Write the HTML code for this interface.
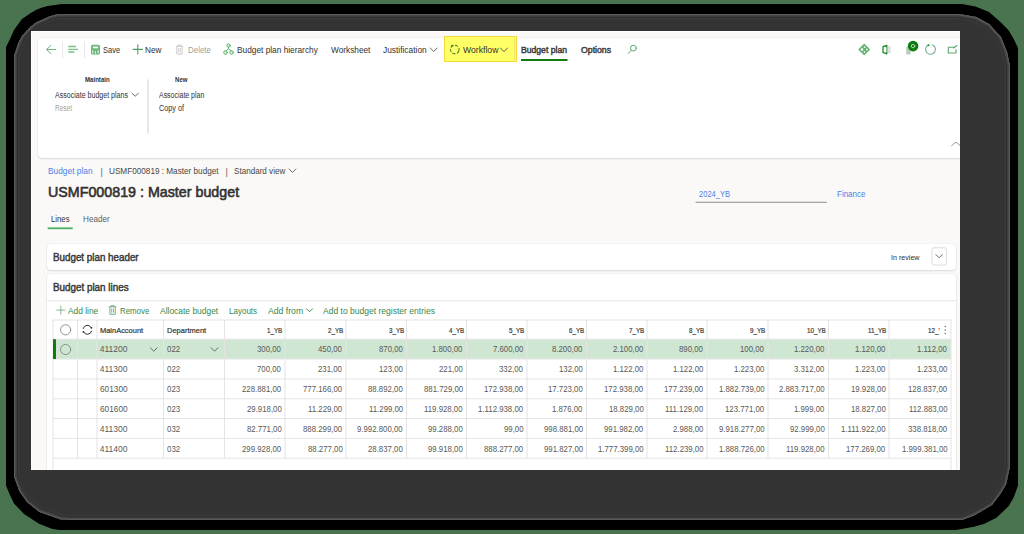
<!DOCTYPE html>
<html><head><meta charset="utf-8">
<style>
*{box-sizing:border-box;margin:0;padding:0}
html,body{width:1024px;height:534px;overflow:hidden;background:#4a7350;font-family:"Liberation Sans",sans-serif;position:relative}
.a{position:absolute}
#blk{left:6px;top:4px;width:1012px;height:526px;background:#000;border-radius:54px 54px 50px 50px}
#gry{left:14px;top:14px;width:996px;height:506px;background:#333;border-radius:46px;box-shadow:inset 0 0 0 1px #5a5a5a, inset 0 0 0 2px #454545, inset 0 0 0 3px #3c3c3c, inset 0 0 0 4px #2c2c2c}
#clip{left:0;top:0;width:1024px;height:534px;clip-path:inset(31px 64px 64px 31px)}
#app{left:31px;top:31px;width:929px;height:439px;background:#faf9f8;border-left:1px solid #fff;border-top:1px solid #fff}
.card{position:absolute;background:#fff;border-radius:4px;box-shadow:0 0 1.5px rgba(0,0,0,.13),0 1px 2px rgba(0,0,0,.11)}
.t{position:absolute;white-space:nowrap;transform-origin:0 0}
svg{position:absolute;left:0;top:0}
</style></head><body>
<svg width="1024" height="534" style="position:absolute;left:0;top:0">
<defs><clipPath id="gc"><path d="M14 55 L15.2 52.8 L18 43.8 L21.9 36 L30.3 27 L36 22.5 L43.2 19.3 L49.3 16.4 L58.1 14 L959 14 L976.2 17 L989 24 L1001 37 L1007 52 L1010 66 L1010 466 L1006.2 484 L1001 493 L992 505 L974 515.4 L962 520 L70 520 L60 519.2 L39 511.7 L27 502 L19.5 491.5 L14 476.5 Z"/></clipPath></defs>
<path d="M6 47 L10 39 L14 30 L22 19 L30 13.5 L35.9 10 L40.8 7.9 L47.6 5.9 L62 4 L962 4 L975.5 6.5 L989 12 L999.4 21 L1008.4 30 L1013.7 39 L1018 48 L1018 485.5 L1013.7 497.4 L1008.4 506.4 L996.4 517.7 L984.4 523.7 L974 526.7 L956 530 L60 530 L52.4 528.9 L39 523.7 L24 514 L14 503.4 L9.7 494.4 L6 485.5 Z" fill="#000"/>
<path d="M14 55 L15.2 52.8 L18 43.8 L21.9 36 L30.3 27 L36 22.5 L43.2 19.3 L49.3 16.4 L58.1 14 L959 14 L976.2 17 L989 24 L1001 37 L1007 52 L1010 66 L1010 466 L1006.2 484 L1001 493 L992 505 L974 515.4 L962 520 L70 520 L60 519.2 L39 511.7 L27 502 L19.5 491.5 L14 476.5 Z" fill="#333"/>
<g clip-path="url(#gc)" fill="none">
<path d="M14 55 L15.2 52.8 L18 43.8 L21.9 36 L30.3 27 L36 22.5 L43.2 19.3 L49.3 16.4 L58.1 14 L959 14 L976.2 17 L989 24 L1001 37 L1007 52 L1010 66 L1010 466 L1006.2 484 L1001 493 L992 505 L974 515.4 L962 520 L70 520 L60 519.2 L39 511.7 L27 502 L19.5 491.5 L14 476.5 Z" stroke="#353535" stroke-width="12"/>
<path d="M14 55 L15.2 52.8 L18 43.8 L21.9 36 L30.3 27 L36 22.5 L43.2 19.3 L49.3 16.4 L58.1 14 L959 14 L976.2 17 L989 24 L1001 37 L1007 52 L1010 66 L1010 466 L1006.2 484 L1001 493 L992 505 L974 515.4 L962 520 L70 520 L60 519.2 L39 511.7 L27 502 L19.5 491.5 L14 476.5 Z" stroke="#3a3a3a" stroke-width="10"/>
<path d="M14 55 L15.2 52.8 L18 43.8 L21.9 36 L30.3 27 L36 22.5 L43.2 19.3 L49.3 16.4 L58.1 14 L959 14 L976.2 17 L989 24 L1001 37 L1007 52 L1010 66 L1010 466 L1006.2 484 L1001 493 L992 505 L974 515.4 L962 520 L70 520 L60 519.2 L39 511.7 L27 502 L19.5 491.5 L14 476.5 Z" stroke="#2e2e2e" stroke-width="8"/>
<path d="M14 55 L15.2 52.8 L18 43.8 L21.9 36 L30.3 27 L36 22.5 L43.2 19.3 L49.3 16.4 L58.1 14 L959 14 L976.2 17 L989 24 L1001 37 L1007 52 L1010 66 L1010 466 L1006.2 484 L1001 493 L992 505 L974 515.4 L962 520 L70 520 L60 519.2 L39 511.7 L27 502 L19.5 491.5 L14 476.5 Z" stroke="#3d3d3d" stroke-width="6"/>
<path d="M14 55 L15.2 52.8 L18 43.8 L21.9 36 L30.3 27 L36 22.5 L43.2 19.3 L49.3 16.4 L58.1 14 L959 14 L976.2 17 L989 24 L1001 37 L1007 52 L1010 66 L1010 466 L1006.2 484 L1001 493 L992 505 L974 515.4 L962 520 L70 520 L60 519.2 L39 511.7 L27 502 L19.5 491.5 L14 476.5 Z" stroke="#464646" stroke-width="4"/>
<path d="M14 55 L15.2 52.8 L18 43.8 L21.9 36 L30.3 27 L36 22.5 L43.2 19.3 L49.3 16.4 L58.1 14 L959 14 L976.2 17 L989 24 L1001 37 L1007 52 L1010 66 L1010 466 L1006.2 484 L1001 493 L992 505 L974 515.4 L962 520 L70 520 L60 519.2 L39 511.7 L27 502 L19.5 491.5 L14 476.5 Z" stroke="#5a5a5a" stroke-width="2"/>
</g>
</svg>
<div class="a" id="clip">
<div class="a" id="app"></div>
<div class="card" style="left:38px;top:38px;width:940px;height:119.5px"></div>
<div class="card" style="left:47px;top:243.5px;width:909px;height:26.5px"></div>
<div class="card" style="left:47px;top:274px;width:909px;height:240px"></div>
<!-- yellow workflow -->
<div class="a" style="left:443.5px;top:35.7px;width:73.8px;height:26.4px;background:#ffff66;border:1px solid #f8d838"></div>
<svg width="1024" height="534" viewBox="0 0 1024 534">
 <g fill="none" stroke-linecap="round" stroke-linejoin="round">
 <!-- separators -->
 <line x1="62.5" y1="41.5" x2="62.5" y2="58" stroke="#e8e8e8" stroke-width="1"/>
 <line x1="84.5" y1="41.5" x2="84.5" y2="58" stroke="#e8e8e8" stroke-width="1"/>
 <line x1="148" y1="80" x2="148" y2="133" stroke="#e1dfdd" stroke-width="1.5"/>
 <!-- back arrow -->
 <path d="M51 45.3 L46.6 49.5 L51 53.7 M46.8 49.5 H55.8" stroke="#6cb47c" stroke-width="1"/>
 <!-- lines icon -->
 <path d="M68.3 46.5 H76 M68.3 49.3 H78 M68.3 52 H74.5" stroke="#7cc08b" stroke-width="1.3" stroke-linecap="butt"/>
 <!-- save icon -->
 <rect x="91" y="44.8" width="9" height="9.6" rx="1.5" fill="#6cb87a"/>
 <rect x="92.9" y="46.6" width="5.2" height="1.7" fill="#fff"/>
 <rect x="92.3" y="50.3" width="1" height="3" fill="#f4fbf5"/>
 <rect x="94.9" y="51.2" width="1" height="2.4" fill="#eaf5ec"/>
 <rect x="97.6" y="50.3" width="1" height="3" fill="#f4fbf5"/>
 <!-- plus -->
 <path d="M133.2 49.4 H142.5 M137.8 44.8 V54" stroke="#4f9d63" stroke-width="1.1"/>
 <!-- delete -->
 <path d="M176.3 46.3 H182.7 M178 46.2 V45 H181 V46.2 M176.8 46.5 V54 H182.2 V46.5 M178.6 48.5 V52 M180.4 48.5 V52" stroke="#c8c6c4" stroke-width="0.9"/>
 <!-- hierarchy -->
 <circle cx="228.5" cy="45.5" r="1.7" fill="#dff0e2" stroke="#5cb46c" stroke-width="1"/>
 <circle cx="225.5" cy="52.5" r="1.8" fill="#dff0e2" stroke="#5cb46c" stroke-width="1"/>
 <circle cx="231.6" cy="52.5" r="1.8" fill="#dff0e2" stroke="#5cb46c" stroke-width="1"/>
 <path d="M228.5 47.2 V48.8 L226.2 50.8 M228.5 48.8 L230.9 50.8" stroke="#5cb46c" stroke-width="1"/>
 <!-- chevrons grey -->
 <path d="M430.3 48 L433.7 51.6 L437.1 48" stroke="#605e5c" stroke-width="0.9"/>
 <path d="M500.5 48 L504 51.6 L507.5 48" stroke="#484644" stroke-width="0.9"/>
 <path d="M131.9 93.2 L135.2 96.2 L138.5 93.2" stroke="#605e5c" stroke-width="0.9"/>
 <path d="M289.1 169 L292.4 172.4 L295.8 169" stroke="#605e5c" stroke-width="0.9"/>
 <path d="M951.7 145.6 L955.9 142 L960 145.6" stroke="#8a8886" stroke-width="0.9"/>
 <path d="M306.5 308.8 L309.5 311.8 L312.5 308.8" stroke="#2f7d3a" stroke-width="0.9"/>
 <path d="M935.7 254.3 L939 257.3 L942.3 254.3" stroke="#605e5c" stroke-width="0.9"/>
 <line x1="514.6" y1="38.5" x2="514.6" y2="59.5" stroke="#e2d96a" stroke-width="0.8" stroke-dasharray="1 1"/>
 <!-- workflow icon -->
 <circle cx="454.8" cy="49.5" r="4.3" stroke="#4a7a2a" stroke-width="1" stroke-dasharray="2.6 2.1" transform="rotate(20 454.8 49.5)"/>
 <circle cx="452" cy="45.7" r="0.9" fill="#1a8a2a"/>
 <!-- budget plan underline -->
 <rect x="521" y="59" width="46.5" height="2" fill="#107c10"/>
 <!-- search -->
 <circle cx="633.4" cy="48.1" r="2.9" stroke="#5aa86d" stroke-width="1"/>
 <path d="M631.3 50.3 L628.2 53.4" stroke="#5aa86d" stroke-width="1"/>
 <!-- right icons -->
 <path d="M864.2 44.4 L869.3 49.5 L864.2 54.6 L859.1 49.5 Z" fill="#62b274" stroke="#62b274" stroke-width="1.2" stroke-linejoin="round"/>
 <circle cx="862" cy="49.5" r="1.3" fill="#fff"/>
 <circle cx="864.6" cy="47.2" r="0.9" fill="#f0f8f1"/>
 <circle cx="866.9" cy="49.5" r="0.9" fill="#f0f8f1"/>
 <circle cx="864.5" cy="51.9" r="0.9" fill="#f0f8f1"/>
 <path d="M886.8 45.3 L883 46.7 V52.4 L886.8 53.8 Z" fill="#fff" stroke="#1d8a2b" stroke-width="1.3" stroke-linejoin="round"/>
 <rect x="885.2" y="47.3" width="1.2" height="4.8" fill="#fff"/>
 <rect x="887.8" y="46.3" width="2.6" height="6.8" fill="#d0d0d0"/>
 <rect x="888.5" y="47" width="0.9" height="5.4" fill="#f4f4f4"/>
 <rect x="906.3" y="46.5" width="4.3" height="8" rx="1" fill="#b9c9ba"/>
 <circle cx="913.1" cy="46.1" r="5.3" fill="#107c10"/>
 <circle cx="913" cy="46.1" r="1.7" stroke="#cfe8cf" stroke-width="0.8"/>
 <path d="M928.3 45 A4.9 4.9 0 1 0 932.6 44.9" stroke="#78ab94" stroke-width="1.1"/>
 <circle cx="928.5" cy="45.2" r="1" fill="#1a8a2a"/>
 <path d="M948.5 47.3 H954 M948.3 47.3 V53 H956 V49.5 M953.5 48 L957 45.5" stroke="#5aa86d" stroke-width="1.1"/>
 <!-- tab underline -->
 <rect x="47.7" y="227.4" width="25" height="1.8" fill="#4caf61"/>
 <!-- 2024 underline -->
 <rect x="695.6" y="201.7" width="131.3" height="1.3" fill="#a6a6a6"/>
 <!-- dropdown button -->
 <rect x="931.9" y="247.8" width="14.5" height="17.2" rx="2" stroke="#dcdcdc" stroke-width="1" fill="#fff"/>
 <path d="M935.9 254.6 L939.1 257.8 L942.3 254.6" stroke="#605e5c" stroke-width="0.9"/>
 <!-- lines card separator -->
 <rect x="47" y="300.2" width="909" height="1" fill="#e8e6e4"/>
 <!-- add line plus -->
 <path d="M56.8 310.1 H64.8 M60.8 306.1 V314.2" stroke="#8ab596" stroke-width="1"/>
 <!-- remove trash -->
 <path d="M109.3 306.8 H115.8 M111 306.7 V305.7 H114 V306.7 M109.9 307 V314.3 H115.3 V307 M111.7 309 V312.3 M113.5 309 V312.3" stroke="#6aa87a" stroke-width="0.9"/>
</g>
<rect x="53" y="339.2" width="898" height="19.8" fill="#cfe6d2"/>
<rect x="53" y="319.5" width="898" height="1" fill="#e5e4e3"/>
<rect x="53" y="338.7" width="898" height="1" fill="#e5e4e3"/>
<rect x="53" y="358.5" width="898" height="1" fill="#e5e4e3"/>
<rect x="53" y="378.4" width="898" height="1" fill="#e5e4e3"/>
<rect x="53" y="398.3" width="898" height="1" fill="#e5e4e3"/>
<rect x="53" y="418.1" width="898" height="1" fill="#e5e4e3"/>
<rect x="53" y="437.9" width="898" height="1" fill="#e5e4e3"/>
<rect x="53" y="457.7" width="898" height="1" fill="#e5e4e3"/>
<rect x="52.5" y="320" width="1" height="150" fill="#e5e4e3"/>
<rect x="77.0" y="320" width="1" height="138.7" fill="#e5e4e3"/>
<rect x="96.5" y="320" width="1" height="138.7" fill="#e5e4e3"/>
<rect x="163.0" y="320" width="1" height="138.7" fill="#e5e4e3"/>
<rect x="224.0" y="320" width="1" height="138.7" fill="#e5e4e3"/>
<rect x="284.5" y="320" width="1" height="138.7" fill="#e5e4e3"/>
<rect x="345.5" y="320" width="1" height="138.7" fill="#e5e4e3"/>
<rect x="406.0" y="320" width="1" height="138.7" fill="#e5e4e3"/>
<rect x="466.0" y="320" width="1" height="138.7" fill="#e5e4e3"/>
<rect x="526.5" y="320" width="1" height="138.7" fill="#e5e4e3"/>
<rect x="586.0" y="320" width="1" height="138.7" fill="#e5e4e3"/>
<rect x="646.5" y="320" width="1" height="138.7" fill="#e5e4e3"/>
<rect x="706.5" y="320" width="1" height="138.7" fill="#e5e4e3"/>
<rect x="767.5" y="320" width="1" height="138.7" fill="#e5e4e3"/>
<rect x="828.0" y="320" width="1" height="138.7" fill="#e5e4e3"/>
<rect x="888.5" y="320" width="1" height="138.7" fill="#e5e4e3"/>
<rect x="950.5" y="320" width="1" height="150" fill="#e5e4e3"/>
<rect x="53" y="339.2" width="3" height="19.8" fill="#107c10"/>
<g fill="none" stroke-linecap="round" stroke-linejoin="round">
<circle cx="65.6" cy="329.8" r="5.1" stroke="#8a8886" stroke-width="0.9"/>
<circle cx="65.6" cy="349.5" r="5.1" stroke="#7f8a80" stroke-width="0.9"/>
<path d="M83.2 328.5 A4.4 4.4 0 0 1 91.3 327.6 M91.6 331.1 A4.4 4.4 0 0 1 83.5 332" stroke="#323130" stroke-width="1"/>
<circle cx="91.4" cy="327.8" r="0.9" fill="#323130"/><circle cx="83.4" cy="331.8" r="0.9" fill="#323130"/>
<path d="M150.4 347.8 L153.8 351.2 L157.2 347.8" stroke="#605e5c" stroke-width="0.9"/>
<path d="M211.2 347.8 L214.6 351.2 L218 347.8" stroke="#605e5c" stroke-width="0.9"/>
</g>
<circle cx="945.2" cy="326.5" r="0.7" fill="#605e5c"/><circle cx="945.2" cy="330" r="0.7" fill="#605e5c"/><circle cx="945.2" cy="333.5" r="0.7" fill="#605e5c"/>

</svg>
<div class="t" style="left:103.20px;top:45.31px;font-size:9px;line-height:10.35px;color:#323130;transform:scaleX(0.838)">Save</div>
<div class="t" style="left:145.40px;top:45.31px;font-size:9px;line-height:10.35px;color:#323130;transform:scaleX(0.910)">New</div>
<div class="t" style="left:188.00px;top:45.31px;font-size:9px;line-height:10.35px;color:#a19f9d;transform:scaleX(0.884)">Delete</div>
<div class="t" style="left:236.90px;top:45.31px;font-size:9px;line-height:10.35px;color:#323130;transform:scaleX(0.923)">Budget plan hierarchy</div>
<div class="t" style="left:330.60px;top:45.31px;font-size:9px;line-height:10.35px;color:#323130;transform:scaleX(0.919)">Worksheet</div>
<div class="t" style="left:383.30px;top:45.31px;font-size:9px;line-height:10.35px;color:#323130;transform:scaleX(0.929)">Justification</div>
<div class="t" style="left:462.60px;top:45.31px;font-size:9px;line-height:10.35px;color:#323130;transform:scaleX(0.961)">Workflow</div>
<div class="t" style="left:521.00px;top:45.31px;font-size:9px;line-height:10.35px;color:#3b3a39;-webkit-text-stroke:0.45px #3b3a39;transform:scaleX(0.957)">Budget plan</div>
<div class="t" style="left:580.50px;top:45.31px;font-size:9px;line-height:10.35px;color:#3b3a39;-webkit-text-stroke:0.45px #3b3a39;transform:scaleX(0.970)">Options</div>
<div class="t" style="left:84.70px;top:75.71px;font-size:6.5px;line-height:7.47px;color:#323130;font-weight:700;transform:scaleX(0.936)">Maintain</div>
<div class="t" style="left:175.00px;top:75.71px;font-size:6.5px;line-height:7.47px;color:#323130;font-weight:700;transform:scaleX(0.935)">New</div>
<div class="t" style="left:55.00px;top:91.17px;font-size:8.5px;line-height:9.77px;color:#323130;transform:scaleX(0.830)">Associate budget plans</div>
<div class="t" style="left:55.00px;top:104.47px;font-size:8.5px;line-height:9.77px;color:#a19f9d;transform:scaleX(0.765)">Reset</div>
<div class="t" style="left:158.60px;top:91.17px;font-size:8.5px;line-height:9.77px;color:#323130;transform:scaleX(0.819)">Associate plan</div>
<div class="t" style="left:158.60px;top:104.47px;font-size:8.5px;line-height:9.77px;color:#323130;transform:scaleX(0.853)">Copy of</div>
<div class="t" style="left:48.10px;top:166.01px;font-size:9px;line-height:10.35px;color:#4f7fe3;transform:scaleX(0.928)">Budget plan</div>
<div class="t" style="left:100.50px;top:167.01px;font-size:9px;line-height:10.35px;color:#605e5c">|</div>
<div class="t" style="left:108.50px;top:166.01px;font-size:9px;line-height:10.35px;color:#484644;transform:scaleX(0.909)">USMF000819 : Master budget</div>
<div class="t" style="left:225.50px;top:167.01px;font-size:9px;line-height:10.35px;color:#605e5c">|</div>
<div class="t" style="left:234.20px;top:166.01px;font-size:9px;line-height:10.35px;color:#484644;transform:scaleX(0.899)">Standard view</div>
<div class="t" style="left:48.40px;top:183.38px;font-size:15px;line-height:17.25px;color:#323130;-webkit-text-stroke:0.6px #323130;transform:scaleX(0.951)">USMF000819 : Master budget</div>
<div class="t" style="left:51.00px;top:213.51px;font-size:9px;line-height:10.35px;color:#323130;transform:scaleX(0.860)">Lines</div>
<div class="t" style="left:82.90px;top:213.51px;font-size:9px;line-height:10.35px;color:#605e5c;transform:scaleX(0.904)">Header</div>
<div class="t" style="left:698.90px;top:189.31px;font-size:9px;line-height:10.35px;color:#4f7fe3;transform:scaleX(0.837)">2024_YB</div>
<div class="t" style="left:836.90px;top:189.31px;font-size:9px;line-height:10.35px;color:#4f7fe3;transform:scaleX(0.887)">Finance</div>
<div class="t" style="left:53.40px;top:252.09px;font-size:10px;line-height:11.50px;color:#3b3a39;-webkit-text-stroke:0.45px #3b3a39;transform:scaleX(0.981)">Budget plan header</div>
<div class="t" style="left:891.20px;top:252.73px;font-size:8px;line-height:9.20px;color:#323130;transform:scaleX(0.890)">In review</div>
<div class="t" style="left:53.40px;top:281.79px;font-size:10px;line-height:11.50px;color:#3b3a39;-webkit-text-stroke:0.45px #3b3a39;transform:scaleX(0.985)">Budget plan lines</div>
<div class="t" style="left:68.40px;top:305.81px;font-size:9px;line-height:10.35px;color:#3a874b;transform:scaleX(0.931)">Add line</div>
<div class="t" style="left:120.20px;top:305.81px;font-size:9px;line-height:10.35px;color:#3a874b;transform:scaleX(0.874)">Remove</div>
<div class="t" style="left:160.20px;top:305.81px;font-size:9px;line-height:10.35px;color:#3a874b;transform:scaleX(0.938)">Allocate budget</div>
<div class="t" style="left:229.00px;top:305.81px;font-size:9px;line-height:10.35px;color:#3a874b;transform:scaleX(0.891)">Layouts</div>
<div class="t" style="left:267.60px;top:305.81px;font-size:9px;line-height:10.35px;color:#3a874b;transform:scaleX(0.961)">Add from</div>
<div class="t" style="left:323.30px;top:305.81px;font-size:9px;line-height:10.35px;color:#3a874b;transform:scaleX(0.948)">Add to budget register entries</div>
<div class="t" style="left:99.80px;top:325.63px;font-size:8px;line-height:9.20px;color:#3b3a39;-webkit-text-stroke:0.22px #3b3a39;transform:scaleX(0.932)">MainAccount</div>
<div class="t" style="left:166.80px;top:325.63px;font-size:8px;line-height:9.20px;color:#3b3a39;-webkit-text-stroke:0.22px #3b3a39;transform:scaleX(0.938)">Department</div>
<div class="t" style="left:267.13px;top:325.63px;font-size:8px;line-height:9.20px;color:#3b3a39;-webkit-text-stroke:0.22px #3b3a39;transform:scaleX(0.780)">1_YB</div>
<div class="t" style="left:328.13px;top:325.63px;font-size:8px;line-height:9.20px;color:#3b3a39;-webkit-text-stroke:0.22px #3b3a39;transform:scaleX(0.780)">2_YB</div>
<div class="t" style="left:388.63px;top:325.63px;font-size:8px;line-height:9.20px;color:#3b3a39;-webkit-text-stroke:0.22px #3b3a39;transform:scaleX(0.780)">3_YB</div>
<div class="t" style="left:448.63px;top:325.63px;font-size:8px;line-height:9.20px;color:#3b3a39;-webkit-text-stroke:0.22px #3b3a39;transform:scaleX(0.780)">4_YB</div>
<div class="t" style="left:509.13px;top:325.63px;font-size:8px;line-height:9.20px;color:#3b3a39;-webkit-text-stroke:0.22px #3b3a39;transform:scaleX(0.780)">5_YB</div>
<div class="t" style="left:568.63px;top:325.63px;font-size:8px;line-height:9.20px;color:#3b3a39;-webkit-text-stroke:0.22px #3b3a39;transform:scaleX(0.780)">6_YB</div>
<div class="t" style="left:629.13px;top:325.63px;font-size:8px;line-height:9.20px;color:#3b3a39;-webkit-text-stroke:0.22px #3b3a39;transform:scaleX(0.780)">7_YB</div>
<div class="t" style="left:689.13px;top:325.63px;font-size:8px;line-height:9.20px;color:#3b3a39;-webkit-text-stroke:0.22px #3b3a39;transform:scaleX(0.780)">8_YB</div>
<div class="t" style="left:750.13px;top:325.63px;font-size:8px;line-height:9.20px;color:#3b3a39;-webkit-text-stroke:0.22px #3b3a39;transform:scaleX(0.780)">9_YB</div>
<div class="t" style="left:807.16px;top:325.63px;font-size:8px;line-height:9.20px;color:#3b3a39;-webkit-text-stroke:0.22px #3b3a39;transform:scaleX(0.780)">10_YB</div>
<div class="t" style="left:868.12px;top:325.63px;font-size:8px;line-height:9.20px;color:#3b3a39;-webkit-text-stroke:0.22px #3b3a39;transform:scaleX(0.780)">11_YB</div>
<div class="t" style="left:928.30px;top:325.63px;font-size:8px;line-height:9.20px;color:#3b3a39;-webkit-text-stroke:0.22px #3b3a39;transform:scaleX(0.780)">12_&#x27;</div>
<div class="t" style="left:99.80px;top:345.47px;font-size:8.5px;line-height:9.77px;color:#5a5958">411200</div>
<div class="t" style="left:167.00px;top:345.47px;font-size:8.5px;line-height:9.77px;color:#5a5958;transform:scaleX(0.930)">022</div>
<div class="t" style="left:257.38px;top:345.47px;font-size:8.5px;line-height:9.77px;color:#5a5958;transform:scaleX(0.920)">300,00</div>
<div class="t" style="left:318.38px;top:345.47px;font-size:8.5px;line-height:9.77px;color:#5a5958;transform:scaleX(0.920)">450,00</div>
<div class="t" style="left:378.88px;top:345.47px;font-size:8.5px;line-height:9.77px;color:#5a5958;transform:scaleX(0.920)">870,00</div>
<div class="t" style="left:432.35px;top:345.47px;font-size:8.5px;line-height:9.77px;color:#5a5958;transform:scaleX(0.920)">1.800,00</div>
<div class="t" style="left:492.85px;top:345.47px;font-size:8.5px;line-height:9.77px;color:#5a5958;transform:scaleX(0.920)">7.600,00</div>
<div class="t" style="left:552.35px;top:345.47px;font-size:8.5px;line-height:9.77px;color:#5a5958;transform:scaleX(0.920)">8.200,00</div>
<div class="t" style="left:612.85px;top:345.47px;font-size:8.5px;line-height:9.77px;color:#5a5958;transform:scaleX(0.920)">2.100,00</div>
<div class="t" style="left:679.38px;top:345.47px;font-size:8.5px;line-height:9.77px;color:#5a5958;transform:scaleX(0.920)">890,00</div>
<div class="t" style="left:740.38px;top:345.47px;font-size:8.5px;line-height:9.77px;color:#5a5958;transform:scaleX(0.920)">100,00</div>
<div class="t" style="left:794.35px;top:345.47px;font-size:8.5px;line-height:9.77px;color:#5a5958;transform:scaleX(0.920)">1.220,00</div>
<div class="t" style="left:854.85px;top:345.47px;font-size:8.5px;line-height:9.77px;color:#5a5958;transform:scaleX(0.920)">1.120,00</div>
<div class="t" style="left:917.43px;top:345.47px;font-size:8.5px;line-height:9.77px;color:#5a5958;transform:scaleX(0.920)">1.112,00</div>
<div class="t" style="left:99.80px;top:365.27px;font-size:8.5px;line-height:9.77px;color:#5a5958">411300</div>
<div class="t" style="left:167.00px;top:365.27px;font-size:8.5px;line-height:9.77px;color:#5a5958;transform:scaleX(0.930)">022</div>
<div class="t" style="left:257.38px;top:365.27px;font-size:8.5px;line-height:9.77px;color:#5a5958;transform:scaleX(0.920)">700,00</div>
<div class="t" style="left:318.38px;top:365.27px;font-size:8.5px;line-height:9.77px;color:#5a5958;transform:scaleX(0.920)">231,00</div>
<div class="t" style="left:378.88px;top:365.27px;font-size:8.5px;line-height:9.77px;color:#5a5958;transform:scaleX(0.920)">123,00</div>
<div class="t" style="left:438.88px;top:365.27px;font-size:8.5px;line-height:9.77px;color:#5a5958;transform:scaleX(0.920)">221,00</div>
<div class="t" style="left:499.38px;top:365.27px;font-size:8.5px;line-height:9.77px;color:#5a5958;transform:scaleX(0.920)">332,00</div>
<div class="t" style="left:558.88px;top:365.27px;font-size:8.5px;line-height:9.77px;color:#5a5958;transform:scaleX(0.920)">132,00</div>
<div class="t" style="left:612.85px;top:365.27px;font-size:8.5px;line-height:9.77px;color:#5a5958;transform:scaleX(0.920)">1.122,00</div>
<div class="t" style="left:672.85px;top:365.27px;font-size:8.5px;line-height:9.77px;color:#5a5958;transform:scaleX(0.920)">1.122,00</div>
<div class="t" style="left:733.85px;top:365.27px;font-size:8.5px;line-height:9.77px;color:#5a5958;transform:scaleX(0.920)">1.223,00</div>
<div class="t" style="left:794.35px;top:365.27px;font-size:8.5px;line-height:9.77px;color:#5a5958;transform:scaleX(0.920)">3.312,00</div>
<div class="t" style="left:854.85px;top:365.27px;font-size:8.5px;line-height:9.77px;color:#5a5958;transform:scaleX(0.920)">1.223,00</div>
<div class="t" style="left:916.85px;top:365.27px;font-size:8.5px;line-height:9.77px;color:#5a5958;transform:scaleX(0.920)">1.233,00</div>
<div class="t" style="left:99.80px;top:385.17px;font-size:8.5px;line-height:9.77px;color:#5a5958;transform:scaleX(0.973)">601300</div>
<div class="t" style="left:167.00px;top:385.17px;font-size:8.5px;line-height:9.77px;color:#5a5958;transform:scaleX(0.930)">023</div>
<div class="t" style="left:242.16px;top:385.17px;font-size:8.5px;line-height:9.77px;color:#5a5958;transform:scaleX(0.920)">228.881,00</div>
<div class="t" style="left:303.16px;top:385.17px;font-size:8.5px;line-height:9.77px;color:#5a5958;transform:scaleX(0.920)">777.166,00</div>
<div class="t" style="left:368.00px;top:385.17px;font-size:8.5px;line-height:9.77px;color:#5a5958;transform:scaleX(0.920)">88.892,00</div>
<div class="t" style="left:423.66px;top:385.17px;font-size:8.5px;line-height:9.77px;color:#5a5958;transform:scaleX(0.920)">881.729,00</div>
<div class="t" style="left:484.16px;top:385.17px;font-size:8.5px;line-height:9.77px;color:#5a5958;transform:scaleX(0.920)">172.938,00</div>
<div class="t" style="left:548.00px;top:385.17px;font-size:8.5px;line-height:9.77px;color:#5a5958;transform:scaleX(0.920)">17.723,00</div>
<div class="t" style="left:604.16px;top:385.17px;font-size:8.5px;line-height:9.77px;color:#5a5958;transform:scaleX(0.920)">172.938,00</div>
<div class="t" style="left:664.16px;top:385.17px;font-size:8.5px;line-height:9.77px;color:#5a5958;transform:scaleX(0.920)">177.239,00</div>
<div class="t" style="left:718.63px;top:385.17px;font-size:8.5px;line-height:9.77px;color:#5a5958;transform:scaleX(0.920)">1.882.739,00</div>
<div class="t" style="left:779.13px;top:385.17px;font-size:8.5px;line-height:9.77px;color:#5a5958;transform:scaleX(0.920)">2.883.717,00</div>
<div class="t" style="left:850.50px;top:385.17px;font-size:8.5px;line-height:9.77px;color:#5a5958;transform:scaleX(0.920)">19.928,00</div>
<div class="t" style="left:908.16px;top:385.17px;font-size:8.5px;line-height:9.77px;color:#5a5958;transform:scaleX(0.920)">128.837,00</div>
<div class="t" style="left:99.80px;top:405.07px;font-size:8.5px;line-height:9.77px;color:#5a5958;transform:scaleX(0.973)">601600</div>
<div class="t" style="left:167.00px;top:405.07px;font-size:8.5px;line-height:9.77px;color:#5a5958;transform:scaleX(0.930)">023</div>
<div class="t" style="left:246.50px;top:405.07px;font-size:8.5px;line-height:9.77px;color:#5a5958;transform:scaleX(0.920)">29.918,00</div>
<div class="t" style="left:308.09px;top:405.07px;font-size:8.5px;line-height:9.77px;color:#5a5958;transform:scaleX(0.920)">11.229,00</div>
<div class="t" style="left:368.59px;top:405.07px;font-size:8.5px;line-height:9.77px;color:#5a5958;transform:scaleX(0.920)">11.299,00</div>
<div class="t" style="left:424.23px;top:405.07px;font-size:8.5px;line-height:9.77px;color:#5a5958;transform:scaleX(0.920)">119.928,00</div>
<div class="t" style="left:478.22px;top:405.07px;font-size:8.5px;line-height:9.77px;color:#5a5958;transform:scaleX(0.920)">1.112.938,00</div>
<div class="t" style="left:552.35px;top:405.07px;font-size:8.5px;line-height:9.77px;color:#5a5958;transform:scaleX(0.920)">1.876,00</div>
<div class="t" style="left:608.50px;top:405.07px;font-size:8.5px;line-height:9.77px;color:#5a5958;transform:scaleX(0.920)">18.829,00</div>
<div class="t" style="left:665.32px;top:405.07px;font-size:8.5px;line-height:9.77px;color:#5a5958;transform:scaleX(0.920)">111.129,00</div>
<div class="t" style="left:725.16px;top:405.07px;font-size:8.5px;line-height:9.77px;color:#5a5958;transform:scaleX(0.920)">123.771,00</div>
<div class="t" style="left:794.35px;top:405.07px;font-size:8.5px;line-height:9.77px;color:#5a5958;transform:scaleX(0.920)">1.999,00</div>
<div class="t" style="left:850.50px;top:405.07px;font-size:8.5px;line-height:9.77px;color:#5a5958;transform:scaleX(0.920)">18.827,00</div>
<div class="t" style="left:908.73px;top:405.07px;font-size:8.5px;line-height:9.77px;color:#5a5958;transform:scaleX(0.920)">112.883,00</div>
<div class="t" style="left:99.80px;top:424.87px;font-size:8.5px;line-height:9.77px;color:#5a5958">411300</div>
<div class="t" style="left:167.00px;top:424.87px;font-size:8.5px;line-height:9.77px;color:#5a5958;transform:scaleX(0.930)">032</div>
<div class="t" style="left:246.50px;top:424.87px;font-size:8.5px;line-height:9.77px;color:#5a5958;transform:scaleX(0.920)">82.771,00</div>
<div class="t" style="left:303.16px;top:424.87px;font-size:8.5px;line-height:9.77px;color:#5a5958;transform:scaleX(0.920)">888.299,00</div>
<div class="t" style="left:357.13px;top:424.87px;font-size:8.5px;line-height:9.77px;color:#5a5958;transform:scaleX(0.920)">9.992.800,00</div>
<div class="t" style="left:428.00px;top:424.87px;font-size:8.5px;line-height:9.77px;color:#5a5958;transform:scaleX(0.920)">99.288,00</div>
<div class="t" style="left:503.72px;top:424.87px;font-size:8.5px;line-height:9.77px;color:#5a5958;transform:scaleX(0.920)">99,00</div>
<div class="t" style="left:543.66px;top:424.87px;font-size:8.5px;line-height:9.77px;color:#5a5958;transform:scaleX(0.920)">998.881,00</div>
<div class="t" style="left:604.16px;top:424.87px;font-size:8.5px;line-height:9.77px;color:#5a5958;transform:scaleX(0.920)">991.982,00</div>
<div class="t" style="left:672.85px;top:424.87px;font-size:8.5px;line-height:9.77px;color:#5a5958;transform:scaleX(0.920)">2.988,00</div>
<div class="t" style="left:718.63px;top:424.87px;font-size:8.5px;line-height:9.77px;color:#5a5958;transform:scaleX(0.920)">9.918.277,00</div>
<div class="t" style="left:790.00px;top:424.87px;font-size:8.5px;line-height:9.77px;color:#5a5958;transform:scaleX(0.920)">92.999,00</div>
<div class="t" style="left:840.79px;top:424.87px;font-size:8.5px;line-height:9.77px;color:#5a5958;transform:scaleX(0.920)">1.111.922,00</div>
<div class="t" style="left:908.16px;top:424.87px;font-size:8.5px;line-height:9.77px;color:#5a5958;transform:scaleX(0.920)">338.818,00</div>
<div class="t" style="left:99.80px;top:444.67px;font-size:8.5px;line-height:9.77px;color:#5a5958">411400</div>
<div class="t" style="left:167.00px;top:444.67px;font-size:8.5px;line-height:9.77px;color:#5a5958;transform:scaleX(0.930)">032</div>
<div class="t" style="left:242.16px;top:444.67px;font-size:8.5px;line-height:9.77px;color:#5a5958;transform:scaleX(0.920)">299.928,00</div>
<div class="t" style="left:307.50px;top:444.67px;font-size:8.5px;line-height:9.77px;color:#5a5958;transform:scaleX(0.920)">88.277,00</div>
<div class="t" style="left:368.00px;top:444.67px;font-size:8.5px;line-height:9.77px;color:#5a5958;transform:scaleX(0.920)">28.837,00</div>
<div class="t" style="left:428.00px;top:444.67px;font-size:8.5px;line-height:9.77px;color:#5a5958;transform:scaleX(0.920)">99.918,00</div>
<div class="t" style="left:484.16px;top:444.67px;font-size:8.5px;line-height:9.77px;color:#5a5958;transform:scaleX(0.920)">888.277,00</div>
<div class="t" style="left:543.66px;top:444.67px;font-size:8.5px;line-height:9.77px;color:#5a5958;transform:scaleX(0.920)">991.827,00</div>
<div class="t" style="left:597.63px;top:444.67px;font-size:8.5px;line-height:9.77px;color:#5a5958;transform:scaleX(0.920)">1.777.399,00</div>
<div class="t" style="left:664.73px;top:444.67px;font-size:8.5px;line-height:9.77px;color:#5a5958;transform:scaleX(0.920)">112.239,00</div>
<div class="t" style="left:718.63px;top:444.67px;font-size:8.5px;line-height:9.77px;color:#5a5958;transform:scaleX(0.920)">1.888.726,00</div>
<div class="t" style="left:786.23px;top:444.67px;font-size:8.5px;line-height:9.77px;color:#5a5958;transform:scaleX(0.920)">119.928,00</div>
<div class="t" style="left:846.16px;top:444.67px;font-size:8.5px;line-height:9.77px;color:#5a5958;transform:scaleX(0.920)">177.269,00</div>
<div class="t" style="left:901.63px;top:444.67px;font-size:8.5px;line-height:9.77px;color:#5a5958;transform:scaleX(0.920)">1.999.381,00</div>
</div>
</body></html>
